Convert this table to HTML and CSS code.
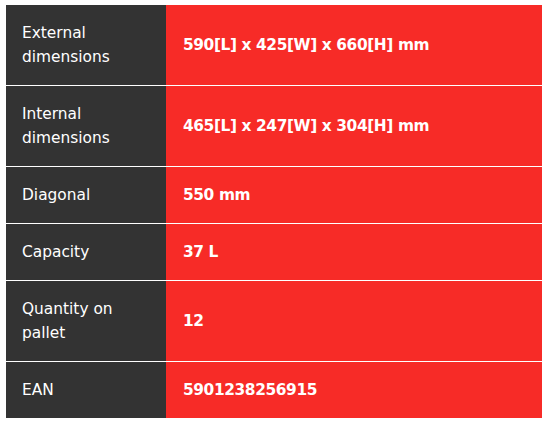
FILE: index.html
```html
<!DOCTYPE html>
<html>
<head>
<meta charset="utf-8">
<link rel="stylesheet" href="styles.css">
</head>
<body>
<table class="specs">
  <tr><th>External<br>dimensions</th><td>590[L] x 425[W] x 660[H] mm</td></tr>
  <tr><th>Internal<br>dimensions</th><td>465[L] x 247[W] x 304[H] mm</td></tr>
  <tr><th>Diagonal</th><td>550 mm</td></tr>
  <tr><th>Capacity</th><td>37 L</td></tr>
  <tr><th>Quantity on<br>pallet</th><td>12</td></tr>
  <tr><th>EAN</th><td>5901238256915</td></tr>
</table>
</body>
</html>
```
FILE: styles.css
```css
html, body { background: #fff; }
body { margin: 5px 8px 0 6px; font-family: "DejaVu Sans", "Liberation Sans", sans-serif; }
.specs { width: 536px; border-collapse: collapse; border-spacing: 0; }
.specs th, .specs td {
  padding: 16px 16px;
  line-height: 24px;
  font-size: 15.4px;
  color: #fff;
  text-align: left;
  vertical-align: middle;
}
.specs tr { border-bottom: 1px solid #fff; }
.specs tr:last-child { border-bottom: none; }
.specs th { width: 128px; background: #333333; font-weight: 400; }
.specs td { background: #f72b27; font-weight: 700; letter-spacing: -0.4px; padding-left: 17px; }
```
